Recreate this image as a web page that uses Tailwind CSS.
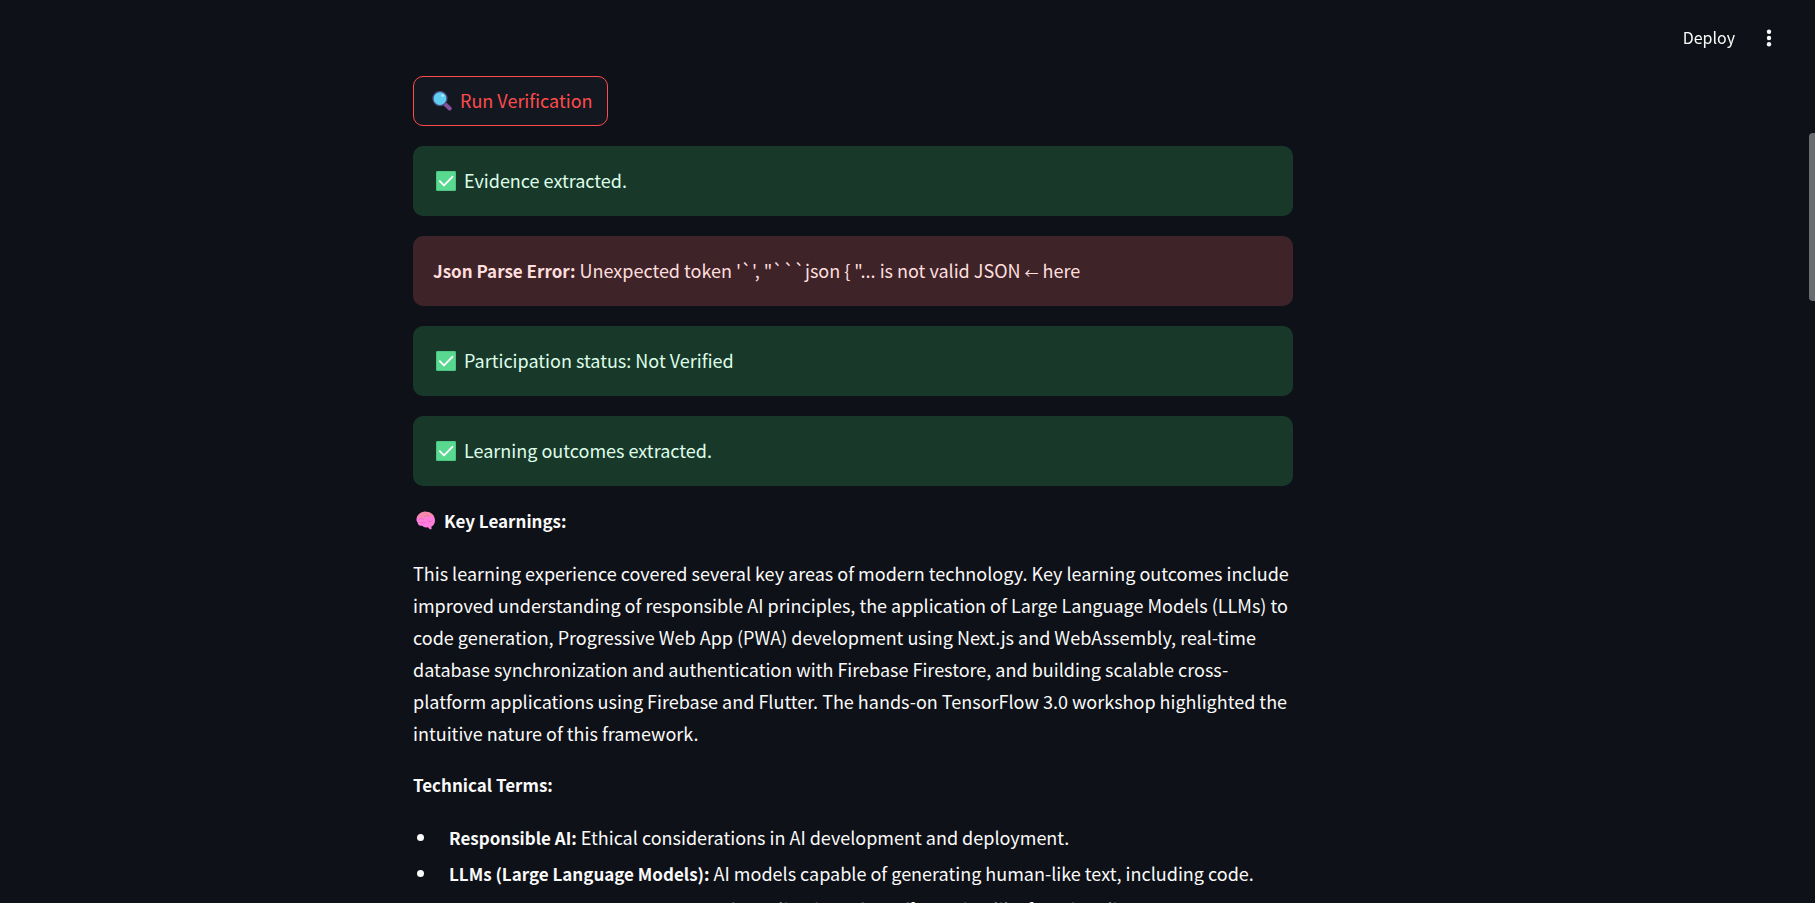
<!DOCTYPE html>
<html lang="en">
<head>
<meta charset="utf-8">
<title>Verification</title>
<script src="https://cdn.jsdelivr.net/npm/@tailwindcss/browser@4"></script>
</head>
<body class="h-screen overflow-hidden bg-[#0e1117] font-['Noto_Sans_CJK_SC','Noto_Sans',sans-serif] text-[18px] leading-8 text-[#fafafa]">
<svg class="hidden" aria-hidden="true">
  <symbol id="check" viewBox="0 0 20 20">
    <rect width="20" height="20" rx="1.2" fill="#4cc585"/>
    <rect x="1" y="0.8" width="18" height="18.2" rx="1" fill="#59d890"/>
    <path d="M3.8 10.2 8 14.4 16.4 5.8" fill="none" stroke="#fff" stroke-width="1.9" stroke-linecap="round" stroke-linejoin="round"/>
  </symbol>
</svg>
<header class="fixed inset-x-0 top-0 flex h-[76px] items-center justify-end gap-6 pr-9">
  <button class="pb-0.5 text-base">Deploy</button>
  <button aria-label="Main menu" class="flex w-5 justify-center">
    <svg class="h-5 w-5" viewBox="0 0 20 20" fill="#fafafa"><circle cx="10" cy="3.8" r="2.2"/><circle cx="10" cy="10" r="2.2"/><circle cx="10" cy="16.2" r="2.2"/></svg>
  </button>
</header>
<div class="pt-[76px] pr-[109px]">
<main class="mx-auto w-full max-w-[880px]">
  <button class="mb-5 flex h-[50px] items-center gap-2 rounded-[10px] border border-[#ff4b4b] bg-[#131720] pr-[14px] pb-0.5 pl-[18px] text-[#ff4b4b]">
    <svg class="mt-0.5 h-5 w-5" viewBox="0 0 20 20"><path d="M13.500 13.500 17.700 17.500" stroke="#84519a" stroke-width="4" stroke-linecap="round"/><circle cx="8" cy="7.6" r="7" fill="#5fcdf0" stroke="#4a4f86" stroke-width="1.3"/><circle cx="10.6" cy="4.6" r="1.3" fill="#b8ebfa"/></svg>
    Run Verification
  </button>
  <div class="flex flex-col gap-5">
    <div role="alert" class="flex items-center gap-2 rounded-[10px] bg-[#183929] px-[23px] pt-[19px] pb-[21px] leading-[30px] text-[#dffde9]"><svg class="mt-0.5 h-5 w-5"><use href="#check"/></svg>Evidence extracted.</div>
    <div role="alert" class="rounded-[10px] bg-[#3e2429] px-5 pt-[19px] pb-[21px] leading-[30px] text-[#ffdede]"><strong class="text-[17px] leading-none">Json Parse Error:</strong> Unexpected token '`', "```json { "... is not valid JSON <span class="text-sm leading-none">←</span> here</div>
    <div role="alert" class="flex items-center gap-2 rounded-[10px] bg-[#183929] px-[23px] pt-[19px] pb-[21px] leading-[30px] text-[#dffde9]"><svg class="mt-0.5 h-5 w-5"><use href="#check"/></svg>Participation status: Not Verified</div>
    <div role="alert" class="flex items-center gap-2 rounded-[10px] bg-[#183929] px-[23px] pt-[19px] pb-[21px] leading-[30px] text-[#dffde9]"><svg class="mt-0.5 h-5 w-5"><use href="#check"/></svg>Learning outcomes extracted.</div>
  </div>
  <div class="flex flex-col gap-5 pt-[19px]">
    <p class="flex items-center gap-2 pl-[3px] text-[17px] font-bold">
      <svg class="h-5 w-5" viewBox="0 0 20 20"><path d="M0.5 8C1 3.5 5 .8 9.500 .8c5.500 0 9.500 3.600 9.500 8.600 0 3-1.500 5.200-3.600 6.200l.2 2.400-1.600.6-2-2.300c-2.500.5-4.600.1-5.600-1.500C3.500 15 1.600 13.600 1.700 11.400.8 10.600.3 9.500.5 8Z" fill="#ff7edb"/><path d="M1 7C2 3.300 5.500.8 9.500.8c4 0 7.300 1.900 8.700 5-3-1.500-5-.8-7 .4S4 6 1 7Z" fill="#f58aa8"/><path d="M3 8.500c2-1.500 4-.5 5 0M9 5.500c1.500-1.500 3.500-1 4.500.3M11.500 10c1.500 1.500 3.500 1 4.500-.5M4.500 12c1.500-1 3-.8 4.500-.2" fill="none" stroke="#e866bd" stroke-width=".8" stroke-linecap="round"/></svg>
      Key Learnings:
    </p>
    <p>This learning experience covered several key areas of modern technology. Key learning outcomes include improved understanding of responsible AI principles, the application of Large Language Models (LLMs) to code generation, Progressive Web App (PWA) development using Next.js and WebAssembly, real-time database synchronization and authentication with Firebase Firestore, and building scalable cross-platform applications using Firebase and Flutter. The hands-on TensorFlow 3.0 workshop highlighted the intuitive nature of this framework.</p>
    <p class="text-[17px] font-bold">Technical Terms:</p>
    <ul class="flex flex-col gap-1">
      <li class="flex items-center gap-[25px] pl-1"><span class="h-[7px] w-[7px] shrink-0 rounded-full bg-[#fafafa]"></span><span><strong class="text-[17px] leading-none">Responsible AI:</strong> Ethical considerations in AI development and deployment.</span></li>
      <li class="flex items-center gap-[25px] pl-1"><span class="h-[7px] w-[7px] shrink-0 rounded-full bg-[#fafafa]"></span><span><strong class="text-[17px] leading-none">LLMs (Large Language Models):</strong> AI models capable of generating human-like text, including code.</span></li>
      <li class="flex items-center gap-[25px] pl-1"><span class="h-[7px] w-[7px] shrink-0 rounded-full bg-[#fafafa]"></span><span><strong class="text-[17px] leading-none">PWAs (Progressive Web Apps):</strong> Web applications that offer native-like functionality.</span></li>
    </ul>
  </div>
</main>
</div>
<div class="fixed top-[133px] right-0 h-[168px] w-[6px] rounded-l-sm bg-[#6b6c70]"></div>
</body>
</html>
